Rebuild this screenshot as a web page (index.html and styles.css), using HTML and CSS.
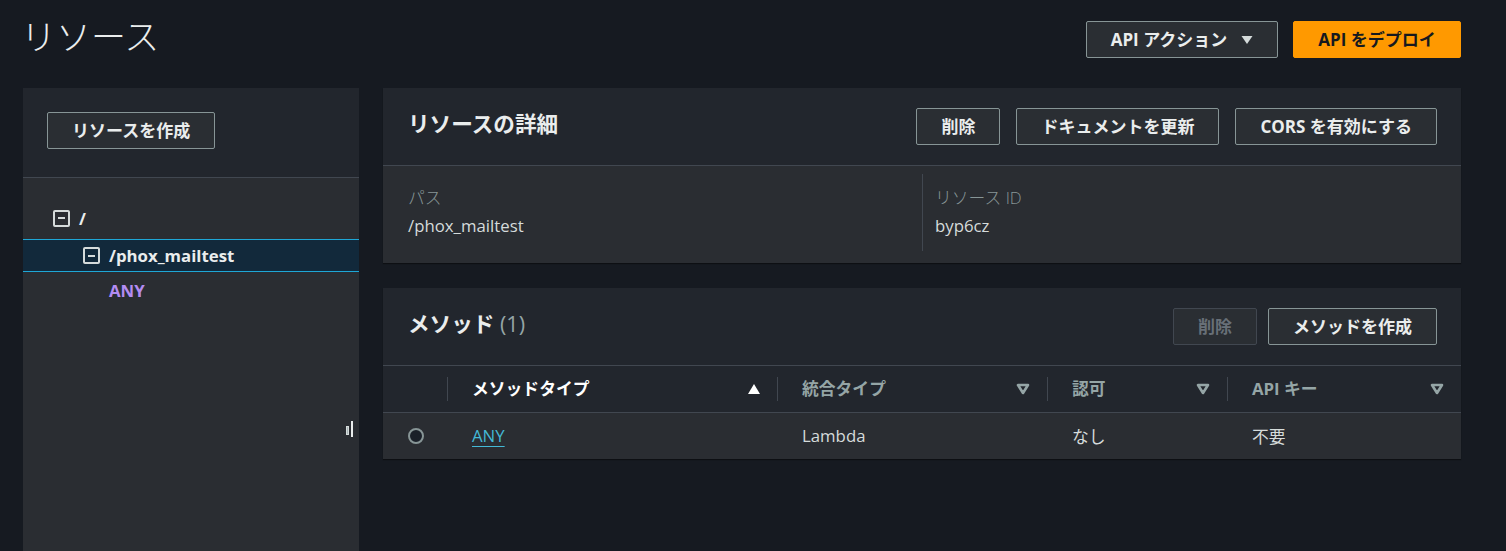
FILE: index.html
```html
<!DOCTYPE html>
<html lang="ja">
<head>
<meta charset="utf-8">
<title>リソース</title>
<link rel="stylesheet" href="styles.css">
</head>
<body>
<div class="page">
  <header class="page-header">
    <h1 class="page-title">リソース</h1>
    <div class="header-actions">
      <button class="btn btn-normal btn-dropdown">API アクション
        <svg class="caret" width="12" height="10" viewBox="0 0 12 10"><path d="M0.5 1 L11.5 1 L6 9 Z" fill="#d5dbdb"/></svg>
      </button>
      <button class="btn btn-primary">API をデプロイ</button>
    </div>
  </header>

  <div class="main">
    <aside class="tree-panel">
      <div class="tree-top">
        <button class="btn btn-normal">リソースを作成</button>
      </div>
      <ul class="tree">
        <li class="tree-row lvl1">
          <span class="tree-toggle"></span>
          <span class="tree-label">/</span>
        </li>
        <li class="tree-row lvl2 selected">
          <span class="tree-toggle"></span>
          <span class="tree-label">/phox_mailtest</span>
        </li>
        <li class="tree-row lvl3">
          <span class="tree-method">ANY</span>
        </li>
      </ul>
      <div class="splitter"><span class="grip-a"></span><span class="grip-b"></span></div>
    </aside>

    <section class="content">
      <div class="container">
        <div class="container-header">
          <h2 class="container-title">リソースの詳細</h2>
          <div class="actions">
            <button class="btn btn-normal">削除</button>
            <button class="btn btn-normal">ドキュメントを更新</button>
            <button class="btn btn-normal">CORS を有効にする</button>
          </div>
        </div>
        <div class="details">
          <div class="detail-col">
            <div class="detail-label">パス</div>
            <div class="detail-value">/phox_mailtest</div>
          </div>
          <div class="detail-col detail-col-sep">
            <div class="detail-label">リソース ID</div>
            <div class="detail-value">byp6cz</div>
          </div>
        </div>
      </div>

      <div class="container">
        <div class="container-header">
          <h2 class="container-title">メソッド <span class="count">(1)</span></h2>
          <div class="actions">
            <button class="btn btn-disabled">削除</button>
            <button class="btn btn-normal">メソッドを作成</button>
          </div>
        </div>
        <div class="table">
          <div class="th th-select"></div>
          <div class="th th-sep sorted">
            <span>メソッドタイプ</span>
            <svg class="sort" width="14" height="12" viewBox="0 0 14 12"><path d="M7 1 L13 11 L1 11 Z" fill="#ffffff"/></svg>
          </div>
          <div class="th th-sep">
            <span>統合タイプ</span>
            <svg class="sort" width="14" height="12" viewBox="0 0 14 12"><path d="M2 2 L12 2 L7 10 Z" fill="none" stroke="#95a5a6" stroke-width="2.6" stroke-linejoin="round"/></svg>
          </div>
          <div class="th th-sep">
            <span>認可</span>
            <svg class="sort" width="14" height="12" viewBox="0 0 14 12"><path d="M2 2 L12 2 L7 10 Z" fill="none" stroke="#95a5a6" stroke-width="2.6" stroke-linejoin="round"/></svg>
          </div>
          <div class="th th-sep">
            <span>API キー</span>
            <svg class="sort" width="14" height="12" viewBox="0 0 14 12"><path d="M2 2 L12 2 L7 10 Z" fill="none" stroke="#95a5a6" stroke-width="2.6" stroke-linejoin="round"/></svg>
          </div>

          <div class="td td-select"><span class="radio"></span></div>
          <div class="td"><a class="link" href="#">ANY</a></div>
          <div class="td">Lambda</div>
          <div class="td">なし</div>
          <div class="td">不要</div>
        </div>
      </div>
    </section>
  </div>
</div>
</body>
</html>
```

FILE: styles.css
```css
* { box-sizing: border-box; }

html, body {
  margin: 0;
  padding: 0;
  height: 100%;
  overflow: hidden;
}

body {
  background: #161a21;
  color: #d5dbdb;
  font-family: "Open Sans", "Noto Sans CJK JP", sans-serif;
  font-size: 16.8px;
}

.page {
  padding: 0 45px 0 23px;
  height: 100%;
  display: flex;
  flex-direction: column;
}

.page-header {
  display: flex;
  align-items: center;
  justify-content: space-between;
  padding-top: 21px;
  height: 88px;
  padding-bottom: 30px;
}

.page-title {
  margin: 0 0 0 -2px;
  font-size: 35px;
  font-weight: 300;
  color: #eaeded;
  line-height: 40px;
  position: relative;
  top: -3px;
}

.header-actions {
  display: flex;
  gap: 15px;
}

.btn {
  font-family: inherit;
  font-size: 17px;
  font-weight: 700;
  height: 37px;
  padding: 0 24px;
  border-radius: 2px;
  display: inline-flex;
  align-items: center;
  justify-content: center;
  line-height: 1;
  white-space: nowrap;
  cursor: pointer;
}

.btn-normal {
  background: #2a2e33;
  border: 1px solid #879596;
  color: #eaeded;
}

.btn-dropdown {
  width: 192px;
  gap: 14px;
  padding: 0;
}

.btn-primary {
  background: #ff9900;
  border: 1px solid #ff9900;
  color: #16191f;
  width: 168px;
  padding: 0;
}

.btn-disabled {
  background: #2a2e33;
  border: 1px solid #414750;
  color: #687078;
  cursor: default;
}

.main {
  flex: 1;
  display: flex;
  gap: 24px;
  min-height: 0;
}

/* left tree panel */
.tree-panel {
  width: 336px;
  flex: none;
  background: #2a2d32;
  position: relative;
}

.tree-top {
  height: 90px;
  background: #22262d;
  border-bottom: 1px solid #414750;
  padding: 24px 24px 0;
}

.tree {
  list-style: none;
  margin: 0;
  padding: 23px 0 0;
}

.tree-row {
  display: flex;
  align-items: center;
  height: 34px;
  font-weight: 700;
  color: #eaeded;
}

.tree-row.lvl1 { padding-left: 30px; }
.tree-row.lvl2 { padding-left: 60px; }
.tree-row.lvl3 { padding-left: 86px; height: 37px; }

.tree-row.selected {
  background: #12293b;
  border-top: 1px solid #1ea7d6;
  border-bottom: 1px solid #1ea7d6;
  height: 33px;
  margin-top: 4px;
}

.tree-toggle {
  width: 17px;
  height: 17px;
  border: 2px solid #d5dbdb;
  border-radius: 2px;
  position: relative;
  margin-right: 9px;
  flex: none;
}

.tree-toggle::after {
  content: "";
  position: absolute;
  left: 3px;
  right: 3px;
  top: 5.5px;
  height: 2px;
  background: #d5dbdb;
}

.tree-method {
  color: #b38cf2;
  font-weight: 700;
}

.splitter {
  position: absolute;
  right: 5px;
  top: 333px;
  width: 8px;
  height: 18px;
}

.grip-a {
  position: absolute;
  left: 0;
  top: 5px;
  width: 3px;
  height: 9px;
  background: #aab7b8;
  border: 1px solid #d5dbdb;
}

.grip-b {
  position: absolute;
  left: 5px;
  top: 0;
  width: 2px;
  height: 16px;
  background: #eaeded;
}

/* right content */
.content {
  flex: 1;
  display: flex;
  flex-direction: column;
  gap: 25px;
  min-width: 0;
}

.container {
  background: #2a2d32;
  box-shadow: 0 1px 1px rgba(0, 0, 0, 0.4);
}

.container-header {
  display: flex;
  align-items: center;
  justify-content: space-between;
  background: #22262d;
  padding: 20px 24px 20px 25px;
  border-bottom: 1px solid #414750;
}

.container-title {
  margin: -5px 0 0;
  font-size: 21.6px;
  font-weight: 700;
  color: #eaeded;
  line-height: 28px;
}

.count {
  font-weight: 400;
  color: #95a5a6;
}

.actions {
  display: flex;
  gap: 16px;
}

.actions .btn-disabled { margin-right: -5px; }

.details {
  display: grid;
  grid-template-columns: 1fr 1fr;
  padding: 8px 25px 12px;
}

.detail-col {
  padding: 10px 0 11px;
}

.detail-col-sep {
  border-left: 1px solid #414750;
  padding-left: 12px;
}

.detail-label {
  color: #879596;
  font-weight: 300;
  line-height: 28px;
}

.detail-value {
  color: #d5dbdb;
  line-height: 28px;
}

/* table */
.table {
  display: grid;
  grid-template-columns: 64px 330px 270px 180px 1fr;
}

.th {
  background: #22262d;
  height: 47px;
  border-bottom: 1px solid #414750;
  display: flex;
  align-items: center;
  justify-content: space-between;
  padding: 0 17px 3px 25px;
  font-weight: 700;
  color: #95a5a6;
  position: relative;
}

.th .sort { margin-top: 3px; }

.th.sorted { color: #ffffff; padding-right: 16px; }

.th-sep::before {
  content: "";
  position: absolute;
  left: 0;
  top: 11px;
  height: 24px;
  width: 1px;
  background: #414750;
}

.sort { flex: none; }

.td {
  height: 46px;
  display: flex;
  align-items: center;
  padding-left: 25px;
  padding-bottom: 1px;
  color: #d5dbdb;
}

.td-select { padding-left: 25px; }

.radio {
  width: 16px;
  height: 16px;
  border-radius: 50%;
  border: 2px solid #879596;
  background: #1a2029;
}

.link {
  color: #44b9d6;
  text-decoration: underline;
  text-underline-offset: 4px;
  text-decoration-thickness: 1px;
}
```
